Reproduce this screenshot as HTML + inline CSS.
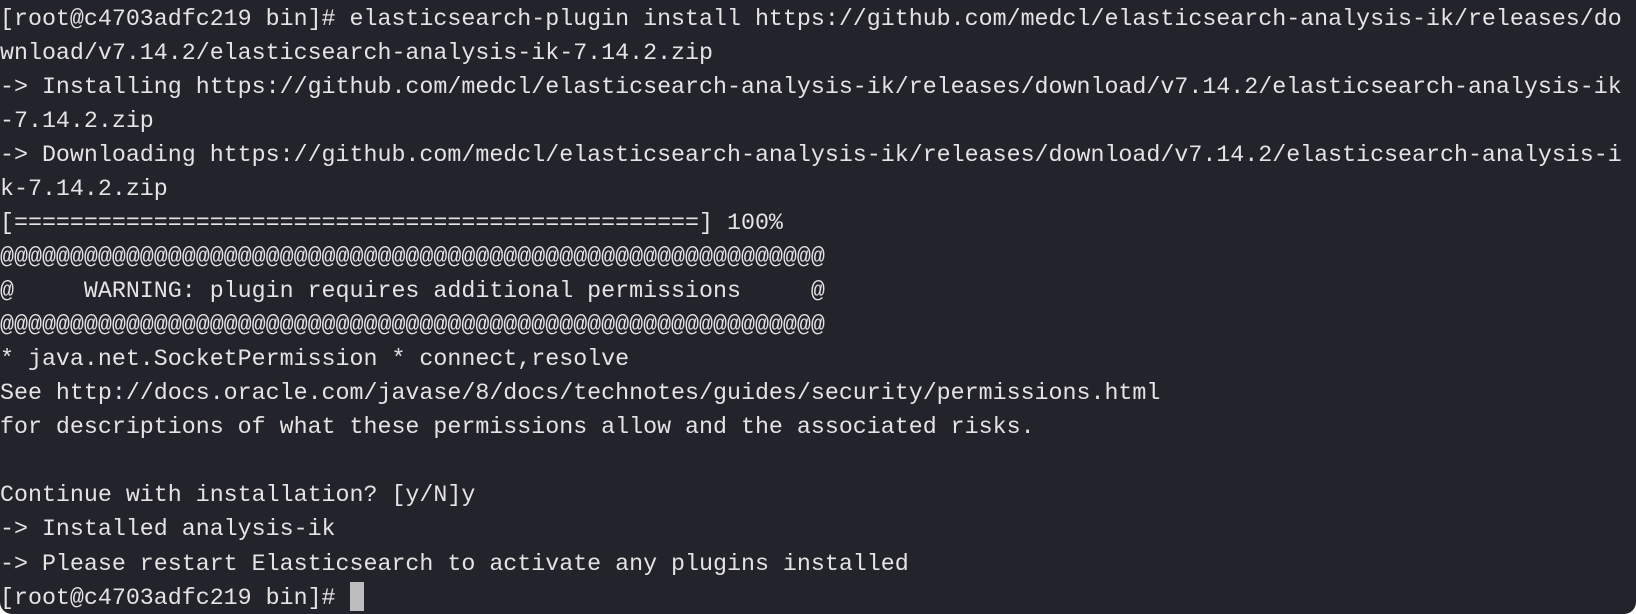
<!DOCTYPE html>
<html><head><style>
html,body{margin:0;padding:0;background:#fff;}
.t{width:1636px;height:614px;background:#23232c;border-radius:0 0 12px 12px;overflow:hidden;position:relative;}
pre{margin:0;position:absolute;left:0;top:2px;font-family:"Liberation Mono",monospace;font-size:23.3px;line-height:34.03px;color:#e4e4e4;letter-spacing:0;white-space:pre;}
.c{display:inline-block;width:14px;height:29px;background:#bdbdbd;vertical-align:-7px;}
</style></head><body><div class="t"><pre>[root@c4703adfc219 bin]# elasticsearch-plugin install https://github.com/medcl/elasticsearch-analysis-ik/releases/do
wnload/v7.14.2/elasticsearch-analysis-ik-7.14.2.zip
-> Installing https://github.com/medcl/elasticsearch-analysis-ik/releases/download/v7.14.2/elasticsearch-analysis-ik
-7.14.2.zip
-> Downloading https://github.com/medcl/elasticsearch-analysis-ik/releases/download/v7.14.2/elasticsearch-analysis-i
k-7.14.2.zip
[=================================================] 100%
@@@@@@@@@@@@@@@@@@@@@@@@@@@@@@@@@@@@@@@@@@@@@@@@@@@@@@@@@@@
@     WARNING: plugin requires additional permissions     @
@@@@@@@@@@@@@@@@@@@@@@@@@@@@@@@@@@@@@@@@@@@@@@@@@@@@@@@@@@@
* java.net.SocketPermission * connect,resolve
See http://docs.oracle.com/javase/8/docs/technotes/guides/security/permissions.html
for descriptions of what these permissions allow and the associated risks.

Continue with installation? [y/N]y
-> Installed analysis-ik
-> Please restart Elasticsearch to activate any plugins installed
[root@c4703adfc219 bin]# <span class="c"></span></pre></div></body></html>
